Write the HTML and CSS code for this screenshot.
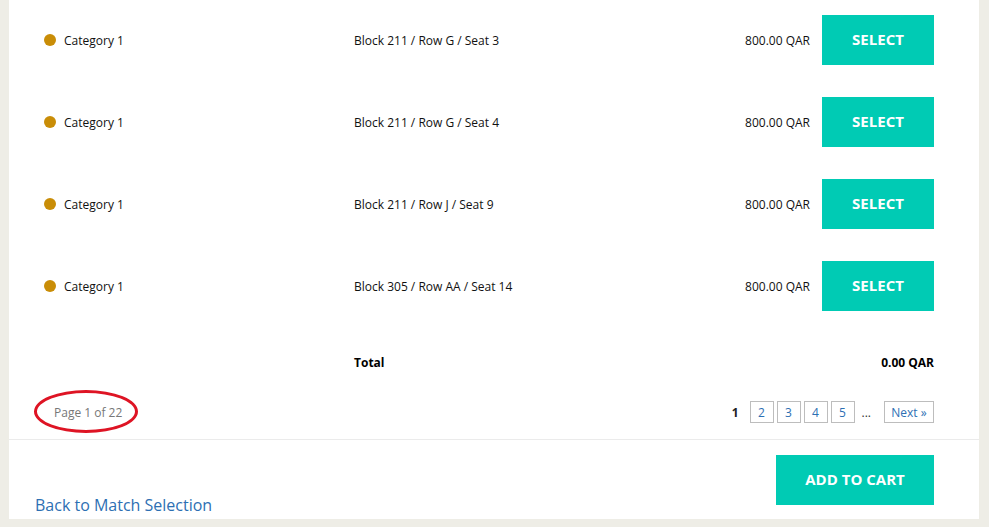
FILE: index.html
```html
<!DOCTYPE html>
<html>
<head>
<meta charset="utf-8">
<link rel="stylesheet" href="styles.css">
</head>
<body>
<div class="panel">
  <div class="rows">
    <div class="row">
      <div class="cat"><span class="dot"></span>Category 1</div>
      <div class="seat">Block 211 / Row G / Seat 3</div>
      <div class="price">800.00 QAR</div>
      <button class="btn select">SELECT</button>
    </div>
    <div class="row">
      <div class="cat"><span class="dot"></span>Category 1</div>
      <div class="seat">Block 211 / Row G / Seat 4</div>
      <div class="price">800.00 QAR</div>
      <button class="btn select">SELECT</button>
    </div>
    <div class="row">
      <div class="cat"><span class="dot"></span>Category 1</div>
      <div class="seat">Block 211 / Row J / Seat 9</div>
      <div class="price">800.00 QAR</div>
      <button class="btn select">SELECT</button>
    </div>
    <div class="row">
      <div class="cat"><span class="dot"></span>Category 1</div>
      <div class="seat">Block 305 / Row AA / Seat 14</div>
      <div class="price">800.00 QAR</div>
      <button class="btn select">SELECT</button>
    </div>
    <div class="total-row">
      <div></div>
      <div class="total-label">Total</div>
      <div class="total-value">0.00 QAR</div>
    </div>
    <div class="pager-row">
      <div class="page-info">Page 1 of 22<span class="ring"></span></div>
      <div class="pager">
        <span class="current">1</span>
        <a class="pg">2</a>
        <a class="pg">3</a>
        <a class="pg">4</a>
        <a class="pg">5</a>
        <span class="ellipsis">...</span>
        <a class="pg next">Next &raquo;</a>
      </div>
    </div>
  </div>
  <div class="footer">
    <a class="back">Back to Match Selection</a>
    <button class="btn cart">ADD TO CART</button>
  </div>
</div>
</body>
</html>
```
FILE: styles.css
```css
html, body {
  margin: 0;
  padding: 0;
}
body {
  background: #eeede6;
  font-family: "Open Sans", "Liberation Sans", sans-serif;
  color: #111;
  height: 527px;
  overflow: hidden;
}
.panel {
  margin-left: 9px;
  width: 970px;
  height: 520px;
  background: #fff;
  display: flex;
  flex-direction: column;
  margin-top: -1px;
}
.rows {
  padding: 0 45px 0 35px;
}
.row {
  display: grid;
  grid-template-columns: 310px 1fr auto 112px;
  align-items: center;
  padding: 16px 0;
  font-size: 12px;
}
.cat {
  display: flex;
  align-items: center;
  gap: 8px;
}
.dot {
  width: 12px;
  height: 12px;
  border-radius: 50%;
  background: #c98d07;
  display: inline-block;
}
.price {
  margin-right: 12px;
}
.btn {
  border: none;
  background: #00cbb4;
  color: #fff;
  font-family: "Open Sans", "Liberation Sans", sans-serif;
  font-weight: 700;
  font-size: 15px;
  height: 50px;
  padding: 0 0 2px;
  cursor: pointer;
}
.select {
  width: 112px;
}
.total-row {
  display: grid;
  grid-template-columns: 310px 1fr auto;
  padding-top: 27px;
  font-size: 12px;
  font-weight: 700;
  line-height: 17px;
  color: #000;
}
.pager-row {
  display: flex;
  justify-content: space-between;
  align-items: center;
  margin-top: 30px;
  height: 22px;
}
.page-info {
  position: relative;
  margin-left: 10px;
  font-size: 12px;
  color: #777;
}
.ring {
  position: absolute;
  left: -20px;
  top: -14px;
  width: 98px;
  height: 37px;
  border: 3.5px solid #de1424;
  border-radius: 50%;
}
.pager {
  display: flex;
  align-items: center;
  font-size: 12px;
}
.current {
  font-weight: 700;
  color: #222;
  margin-right: 11px;
}
.pg {
  display: inline-flex;
  align-items: center;
  justify-content: center;
  box-sizing: border-box;
  width: 24px;
  height: 22px;
  border: 1px solid #bdbdbd;
  color: #2d6fb3;
  margin-right: 3px;
}
.ellipsis {
  color: #333;
  margin: 0 13px 0 4px;
}
.next {
  width: 50px;
  margin-right: 0;
}
.footer {
  margin-top: 16px;
  border-top: 1px solid #ebebeb;
  padding: 15px 45px 0 26px;
  display: flex;
  justify-content: space-between;
  align-items: flex-end;
  flex: 1;
  box-sizing: border-box;
}
.back {
  color: #2d6fb3;
  font-size: 16px;
  line-height: 22px;
  margin-bottom: 4px;
}
.cart {
  width: 158px;
  margin-bottom: 15px;
}
```
